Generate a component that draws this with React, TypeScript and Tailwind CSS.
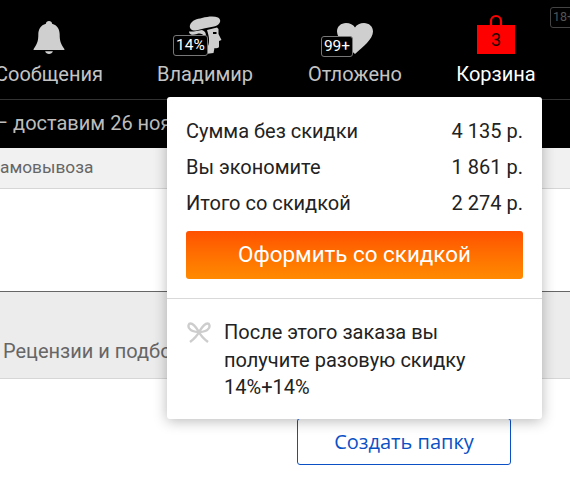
const font = { fontFamily: 'Roboto, sans-serif' };

function Bell() {
  return (
    <svg width="32" height="33" viewBox="0 0 32 34" className="block">
      <path d="M16 0c1.800 0 3 1.100 3.200 2.800C24.600 4.300 27 8.600 27 14c0 6 .8 9.500 4.800 14.800.4.700.1 1.200-.6 1.200H.8c-.7 0-1-.5-.6-1.200C4.200 23.500 5 20 5 14c0-5.400 2.400-9.700 7.800-11.200C13 1.100 14.200 0 16 0z" fill="#cfcfcf" />
      <path d="M12 31.200h8c-.6 1.800-2.200 2.800-4 2.800s-3.400-1-4-2.800z" fill="#cfcfcf" />
    </svg>
  );
}

function Person() {
  return (
    <svg width="34" height="38" viewBox="0 0 34 38" className="block">
      <path d="M2 9C4 4 9 3 14 2c6-1.500 12-2 16-.5 2 1 3 3.500 1.500 5.500-1 2-3 3-5.500 3.500-6 1-12 2.500-18 4-4 .5-7-2-6-5.500z" fill="#cfcfcf" />
      <path d="M1 15.500c4 .5 9-1 13-1.500 3 1 4 3 4 6h-2c-1-2-4-3-7-2-2 .5-4 1-6 .5-1-.5-2-1.500-2-3z" fill="#cfcfcf" />
      <path d="M19 14l10-2.500 1.500 1.500v5l3 6-2.500 1v5.500c0 1.500-2 2-4.500 1.500l-1 5-8 1 2.500-8c1-2 1-5 1-7s-1-6-2-9z" fill="#cfcfcf" />
      <path d="M25 16h3.500v2H25z" fill="#000" />
    </svg>
  );
}

function Heart() {
  return (
    <svg width="36" height="31" viewBox="0 0 36 31" className="block">
      <path d="M18 31C10 24 0 16 0 8.500 0 3.500 4 0 9 0c4 0 7.200 1.500 9 4.500C19.800 1.500 23 0 27 0c5 0 9 3.500 9 8.500C36 16 26 24 18 31z" fill="#cfcfcf" />
    </svg>
  );
}

function Bag() {
  return (
    <div className="flex h-[40px] w-[38px] flex-col items-center">
      <svg width="14" height="11" viewBox="0 0 14 11" className="block">
        <path d="M2 11V7a5 5 0 0 1 10 0v4" fill="none" stroke="#ff0000" strokeWidth="2.200" />
      </svg>
      <div className="flex h-[29px] w-[38px] items-center justify-center bg-[#ff0000] text-[18px] leading-none text-[#1a0000]">3</div>
    </div>
  );
}

function Gift() {
  return (
    <svg width="24" height="22" viewBox="0 0 24 22" className="block" fill="none" stroke="#cdcdcd" strokeWidth="2.400">
      <path d="M12 10C9 5 6 1.500 3.500 1.500 1.500 1.500 1 4 2 6c1.500 2.500 6 4 10 4zm0 0c3-5 6-8.500 8.500-8.500 2 0 2.500 2.500 1.500 4.500-1.500 2.500-6 4-10 4z" />
      <path d="M12 10c-2 4-5 7-9 10M12 10c2 4 5 7 9 10" />
    </svg>
  );
}

function Badge({ children, className }: { children: string; className: string }) {
  return (
    <span className={`absolute flex h-[21px] items-center justify-center rounded-[3px] border border-[#777] bg-black text-[15.500px] leading-none text-white ${className}`}>
      {children}
    </span>
  );
}

function NavItem({ label, icon, width, active }: { label: string; icon: React.ReactNode; width: string; active?: boolean }) {
  return (
    <div className={`flex shrink-0 flex-col items-center ${width}`}>
      <div className="relative flex h-[40px] items-end justify-center pb-[1px]">{icon}</div>
      <span className={`mt-[6px] whitespace-nowrap text-[20px] leading-[26px] ${active ? 'text-white' : 'text-[#c4c4c4]'}`}>{label}</span>
    </div>
  );
}

function Row({ label, value }: { label: string; value: string }) {
  return (
    <div className="flex h-[36px] items-center justify-between text-[20px] text-[#222]">
      <span>{label}</span>
      <span>{value}</span>
    </div>
  );
}

export default function App() {
  return (
    <div className="relative h-[489px] w-[570px] overflow-hidden bg-white" style={font}>
      <div className="h-[148px] overflow-hidden bg-black">
        <div className="relative h-[100px] border-b border-[#333]">
          <div className="ml-[-21px] flex pt-[15px]">
            <NavItem label="Сообщения" width="w-[140px]" icon={<Bell />} />
            <NavItem
              label="Владимир"
              width="w-[172px]"
              icon={
                <div className="relative">
                  <Person />
                  <Badge className="left-[-15px] top-[19px] w-[35px]">14%</Badge>
                </div>
              }
            />
            <NavItem
              label="Отложено"
              width="w-[128px]"
              icon={
                <div className="relative">
                  <Heart />
                  <Badge className="left-[-16px] top-[13px] w-[32px]">99+</Badge>
                </div>
              }
            />
            <NavItem label="Корзина" width="w-[154px]" active icon={<Bag />} />
          </div>
          <span className="absolute left-[550px] top-[7px] flex h-[21px] w-[30px] items-center rounded-[3px] border border-[#444] pl-[2px] text-[12.500px] leading-none text-[#555]">18+</span>
        </div>
        <div className="ml-[-5px] whitespace-nowrap pt-[10px] text-[20px] leading-[26px] text-[#bdbdbd]">– доставим 26 ноября</div>
      </div>

      <div className="flex h-[41px] items-center overflow-hidden border-b border-[#d6d6d6] bg-[#f1f1f1] text-[17.300px] text-[#666]">
        <span className="ml-[-9px]">самовывоза</span>
      </div>

      <div className="h-[102px]" />

      <div className="flex h-[88px] items-end border-y border-t-[#666] border-b-[#d6d6d6] bg-[#ececec] pb-[14px] pl-[3px] text-[20px] leading-[26px] text-[#666]">
        <span className="whitespace-nowrap">Рецензии и подборки</span>
      </div>

      <div className="flex justify-end pr-[59px] pt-[39px]">
        <div className="flex h-[47px] w-[214px] items-center justify-center rounded-[3px] border border-[#0b51c5] text-[20px] text-[#0b51c5]" style={{ fontFamily: '"Open Sans", sans-serif' }}>
          Создать папку
        </div>
      </div>

      <div className="absolute left-[167px] top-[97px] h-[322px] w-[375px] rounded-[3px] bg-white shadow-[0_2px_14px_rgba(0,0,0,0.28)]">
        <div className="px-[19px] pt-[16px]">
          <Row label="Сумма без скидки" value="4 135 р." />
          <Row label="Вы экономите" value="1 861 р." />
          <Row label="Итого со скидкой" value="2 274 р." />
          <div className="mt-[10px] flex h-[48px] items-center justify-center rounded-[3px] bg-gradient-to-b from-[#ff5000] to-[#ff8a00] text-[22.400px] text-white">
            Оформить со скидкой
          </div>
        </div>
        <div className="mt-[19px] border-t border-[#d9d9d9]" />
        <div className="flex pl-[20px] pr-[50px] pt-[20px]">
          <div className="w-[37px] shrink-0 pt-[3px]">
            <Gift />
          </div>
          <p className="text-[20px] leading-[27.500px] text-[#222]">После этого заказа вы получите разовую скидку 14%+14%</p>
        </div>
      </div>
    </div>
  );
}
